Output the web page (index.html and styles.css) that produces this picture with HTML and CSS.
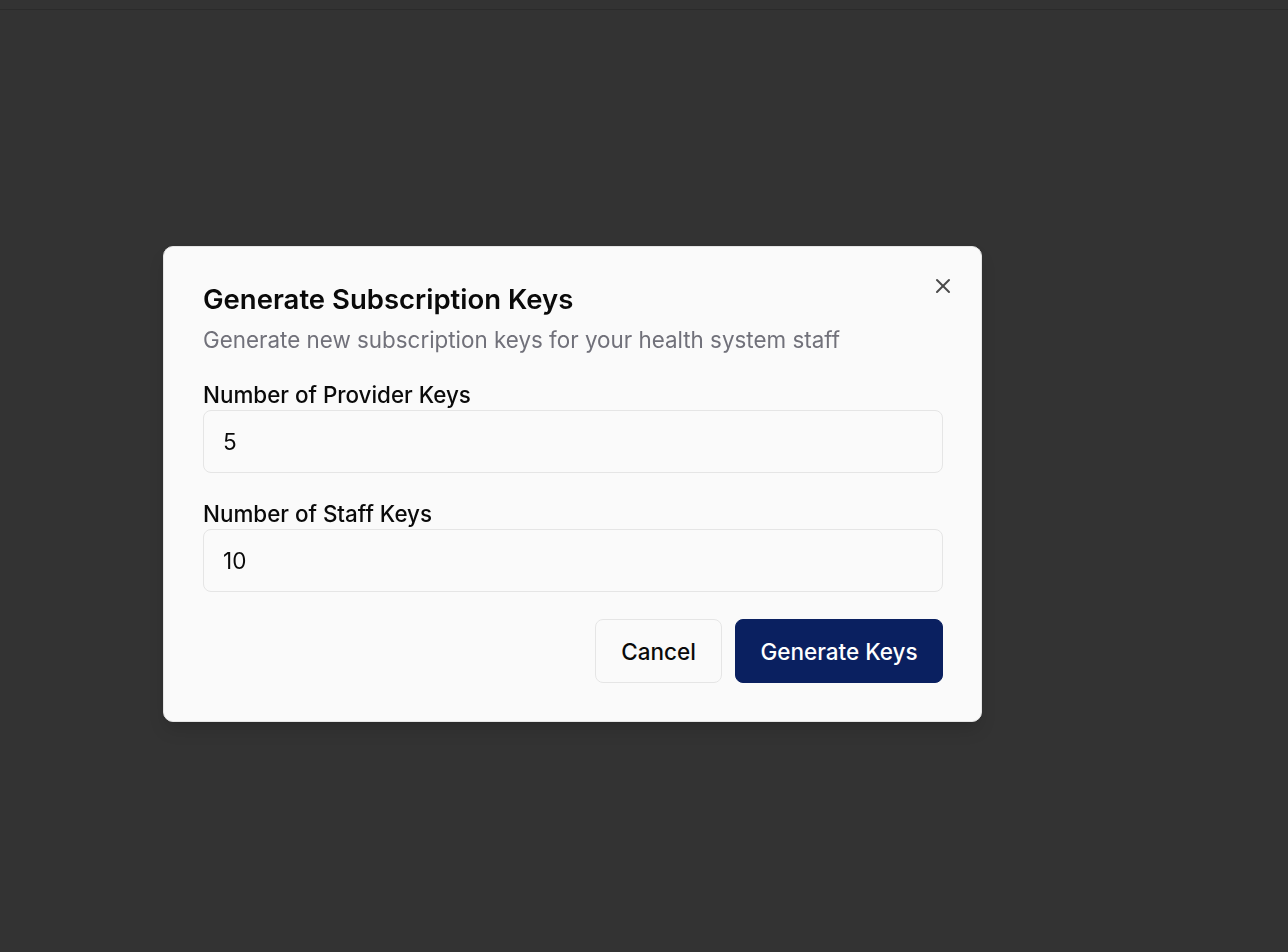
FILE: index.html
```html
<!DOCTYPE html>
<html lang="en">
<head>
<meta charset="utf-8">
<title>Generate Subscription Keys</title>
<link rel="stylesheet" href="styles.css">
</head>
<body>
<div class="topbar"></div>
<div class="overlay">
  <div class="dialog" role="dialog" aria-labelledby="dlg-title">
    <button class="close" aria-label="Close">
      <svg width="24" height="24" viewBox="0 0 24 24" fill="none" stroke="currentColor" stroke-width="2" stroke-linecap="round" stroke-linejoin="round"><path d="M18 6 6 18"/><path d="m6 6 12 12"/></svg>
    </button>
    <div class="header">
      <h2 id="dlg-title" class="title">Generate Subscription Keys</h2>
      <p class="desc">Generate new subscription keys for your health system staff</p>
    </div>
    <div class="field">
      <label class="label" for="prov">Number of Provider Keys</label>
      <input class="input" id="prov" type="text" value="5">
    </div>
    <div class="field">
      <label class="label" for="staff">Number of Staff Keys</label>
      <input class="input" id="staff" type="text" value="10">
    </div>
    <div class="footer">
      <button class="btn btn-outline">Cancel</button>
      <button class="btn btn-primary">Generate Keys</button>
    </div>
  </div>
</div>
</body>
</html>
```

FILE: styles.css
```css
* { box-sizing: border-box; }
html, body { margin: 0; height: 100%; }
body {
  background: #333333;
  font-family: Inter, "Noto Sans", sans-serif;
  color: #0a0a0a;
}
.topbar {
  height: 10px;
  border-bottom: 1px solid #2b2b2b;
}
.overlay {
  position: fixed;
  inset: 0;
  display: flex;
  align-items: center;
  justify-content: flex-start;
  padding: 16px 0 0 163px;
}
.dialog {
  position: relative;
  width: 819px;
  background: #fafafa;
  border: 1px solid #e5e5e5;
  border-radius: 10px;
  padding: 35px 38px 38px 39px;
  box-shadow: 0 10px 18px -3px rgba(0,0,0,0.14), 0 4px 6px -4px rgba(0,0,0,0.1);
  display: flex;
  flex-direction: column;
}
.close {
  position: absolute;
  top: 27px;
  right: 26px;
  background: none;
  border: 0;
  padding: 0;
  color: #4a4a4a;
  display: flex;
}
.header { display: flex; flex-direction: column; gap: 9px; }
.title {
  margin: 0;
  font-size: 27.5px;
  font-weight: 600;
  line-height: 34px;
}
.desc {
  margin: 0;
  font-size: 22.4px;
  line-height: 30px;
  color: #71717a;
}
.field {
  display: flex;
  flex-direction: column;
  gap: 1px;
  margin-top: 26px;
}
.field + .field { margin-top: 27px; }
.label {
  font-size: 22.4px;
  font-weight: 500;
  line-height: 28px;
}
.input {
  height: 63px;
  border: 1px solid #e5e5e5;
  border-radius: 8px;
  background: #fafafa;
  padding: 0 19px;
  font-family: inherit;
  font-size: 22.5px;
  color: #0a0a0a;
  outline: none;
}
.footer {
  display: flex;
  justify-content: flex-end;
  gap: 13px;
  margin-top: 27px;
}
.btn {
  height: 64px;
  border-radius: 8px;
  font-family: inherit;
  font-size: 22.5px;
  font-weight: 500;
  padding: 0;
}
.btn-outline {
  background: #fafafa;
  border: 1px solid #e5e5e5;
  color: #0a0a0a;
  width: 127px;
}
.btn-primary {
  background: #0a2060;
  border: 1px solid #0a2060;
  color: #ffffff;
  width: 208px;
}
```
